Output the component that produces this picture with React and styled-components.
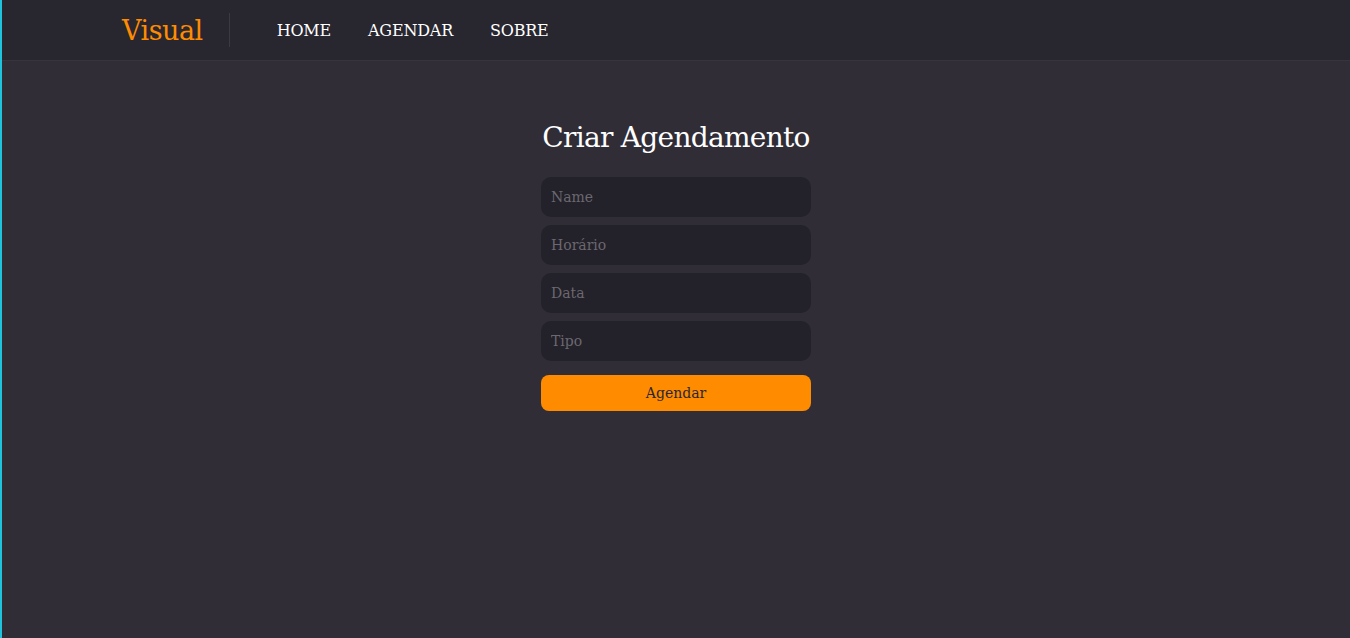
import React from 'react'
import styled, { createGlobalStyle } from 'styled-components'

const GlobalStyle = createGlobalStyle`
  html, body {
    margin: 0;
    padding: 0;
    background: #312d37;
    font-family: "DejaVu Serif", "Liberation Serif", serif;
  }
  body {
    border-left: 2px solid #1fc3dc;
    min-height: 638px;
    box-sizing: border-box;
  }
  * { box-sizing: border-box; }
`

const Page = styled.div`
  min-height: 638px;
  display: flex;
  flex-direction: column;
`

const Header = styled.header`
  height: 61px;
  background: #28262f;
  border-bottom: 1px solid #37343d;
  display: flex;
  align-items: center;
  padding-left: 120px;
`

const Logo = styled.a`
  color: #ff8c00;
  font-size: 27px;
  text-decoration: none;
  padding-right: 26px;
  border-right: 1px solid #3b3941;
  height: 34px;
  display: flex;
  align-items: center;
  letter-spacing: -0.5px;
`

const Nav = styled.nav`
  display: flex;
  gap: 37px;
  margin-left: 47px;
`

const NavLink = styled.a`
  color: #ffffff;
  font-size: 16px;
  text-decoration: none;
  letter-spacing: -0.2px;
`

const Main = styled.main`
  display: flex;
  flex-direction: column;
  align-items: center;
  padding-top: 60px;
`

const Title = styled.h1`
  color: #ffffff;
  font-weight: 400;
  font-size: 28px;
  margin: 0 0 23px;
  letter-spacing: -0.7px;
`

const Form = styled.form`
  width: 270px;
  display: flex;
  flex-direction: column;
  gap: 8px;
`

const Input = styled.input`
  height: 40px;
  border: none;
  border-radius: 10px;
  background: #232129;
  padding: 0 10px;
  font-family: inherit;
  font-size: 14px;
  color: #ddd;
  outline: none;
  &::placeholder {
    color: #6b6870;
  }
`

const Button = styled.button`
  margin-top: 6px;
  height: 36px;
  border: none;
  border-radius: 8px;
  background: #ff8c00;
  color: #2a2630;
  font-family: inherit;
  font-size: 14px;
  cursor: pointer;
`

export default function App() {
  return (
    <Page>
      <GlobalStyle />
      <Header>
        <Logo href="#">Visual</Logo>
        <Nav>
          <NavLink href="#">HOME</NavLink>
          <NavLink href="#">AGENDAR</NavLink>
          <NavLink href="#">SOBRE</NavLink>
        </Nav>
      </Header>
      <Main>
        <Title>Criar Agendamento</Title>
        <Form onSubmit={e => e.preventDefault()}>
          <Input placeholder="Name" />
          <Input placeholder="Horário" />
          <Input placeholder="Data" />
          <Input placeholder="Tipo" />
          <Button type="submit">Agendar</Button>
        </Form>
      </Main>
    </Page>
  )
}
